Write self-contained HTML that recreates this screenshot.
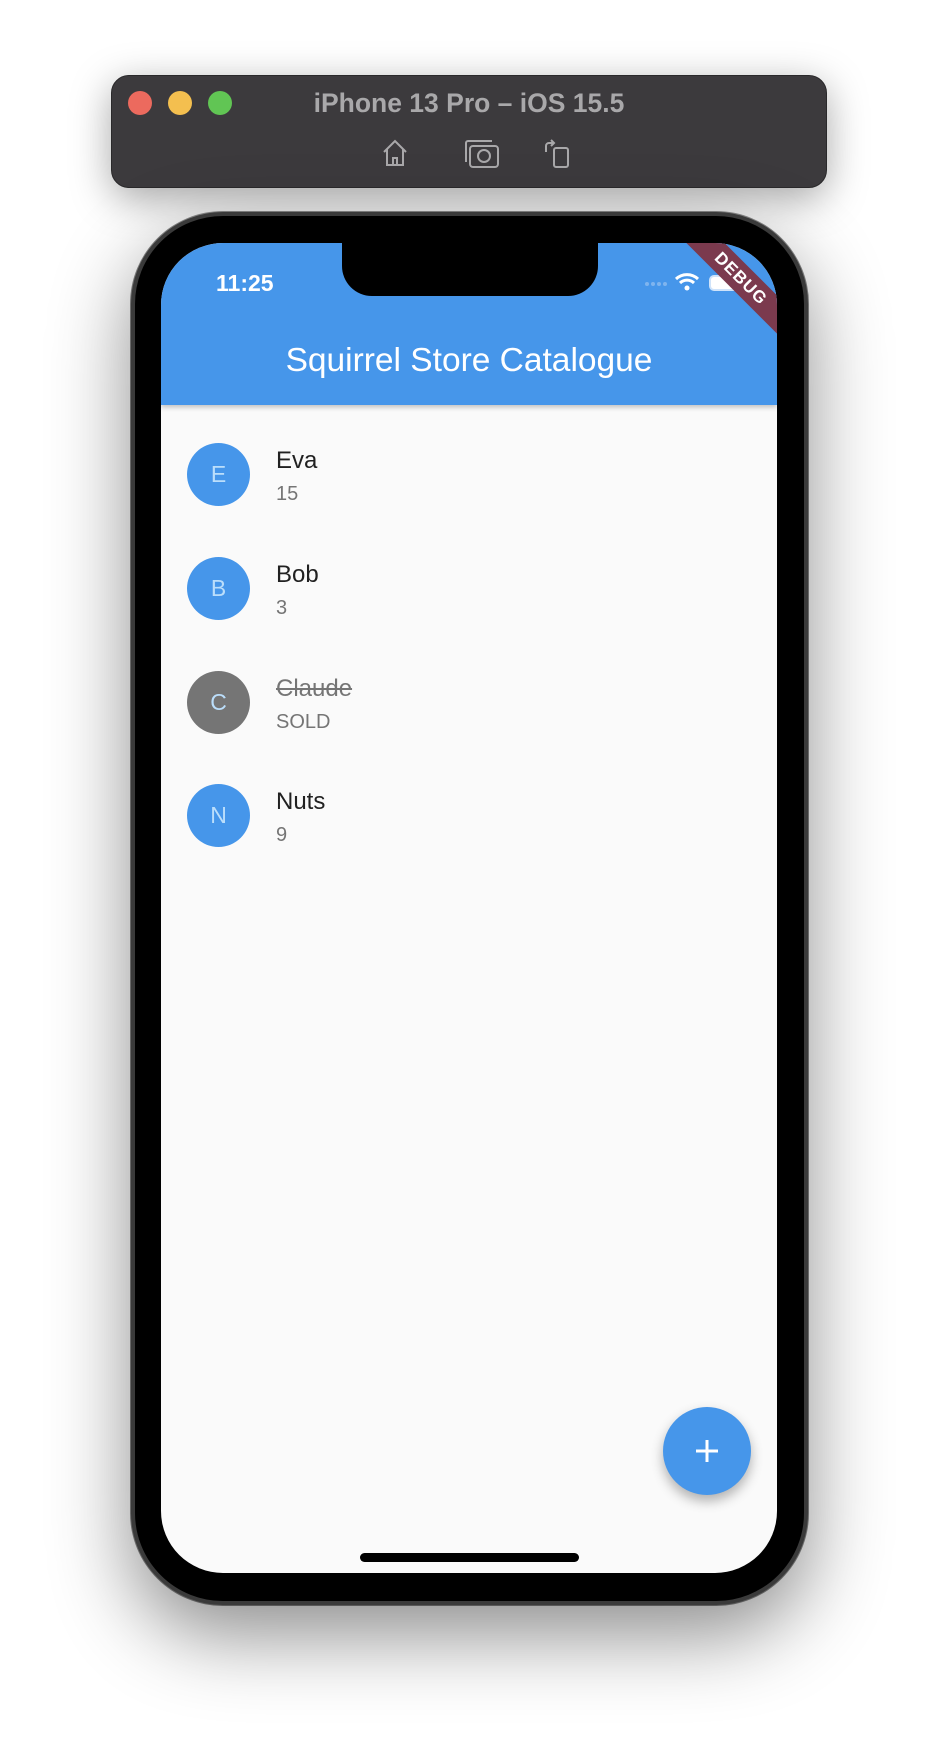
<!DOCTYPE html>
<html><head><meta charset="utf-8"><style>
*{margin:0;padding:0;box-sizing:border-box}
body{width:938px;height:1758px;background:#fff;position:relative;overflow:hidden;font-family:"Liberation Sans",sans-serif}
.bar{position:absolute;left:111px;top:75px;width:716px;height:113px;background:#3c3a3d;border-radius:18px;border:1px solid #2a292b;box-shadow:0 10px 40px rgba(0,0,0,.35)}
.dot{position:absolute;top:91px;width:24px;height:24px;border-radius:50%}
.ttl{position:absolute;left:0;width:938px;top:88px;text-align:center;color:#a9a8aa;font-weight:bold;font-size:26.5px}
.phone{position:absolute;left:131px;top:212px;width:677px;height:1393px;border-radius:92px;background:#000;border:4px solid #3a3a3a;box-shadow:0 30px 80px rgba(0,0,0,.45),0 0 0 1px #888}
.screen{position:absolute;left:161px;top:243px;width:616px;height:1330px;border-radius:62px;background:#fafafa;overflow:hidden}
.app{position:absolute;left:0;top:0;width:616px;height:162px;background:#4696ea;box-shadow:0 2px 5px rgba(0,0,0,.25);overflow:hidden}
.notch{position:absolute;left:181px;top:-5px;width:256px;height:58px;background:#000;border-radius:0 0 30px 30px}
.time{position:absolute;left:55px;top:27px;color:#fff;font-size:23px;font-weight:bold}
.h{position:absolute;left:0;width:616px;top:99px;text-align:center;color:#fff;font-size:33.5px}
.av{position:absolute;left:26px;width:63px;height:63px;border-radius:50%;background:#4696ea;color:#bbdefb;font-size:23px;text-align:center;line-height:63px}
.nm{position:absolute;left:115px;font-size:24px;color:#212121}
.sb{position:absolute;left:115px;font-size:20px;color:#757575}
.fab{position:absolute;left:502px;top:1164px;width:88px;height:88px;border-radius:50%;background:#4696ea;box-shadow:0 6px 12px rgba(0,0,0,.3)}
.home{position:absolute;left:199px;top:1310px;width:219px;height:9px;border-radius:5px;background:#000}
.ribbon{position:absolute;left:470px;top:22px;width:220px;height:27px;background:#7b3a4e;transform:rotate(45deg);color:#fff;font-weight:bold;font-size:17px;text-align:center;line-height:27px;letter-spacing:1px}
</style></head><body>
<div class="bar"></div>
<div class="dot" style="left:128px;background:#ec6a5e"></div>
<div class="dot" style="left:168px;background:#f4bf4f"></div>
<div class="dot" style="left:208px;background:#61c554"></div>
<div class="ttl">iPhone 13 Pro – iOS 15.5</div>
<svg style="position:absolute;left:380px;top:138px" width="200" height="32" fill="none" stroke="#a9a8aa" stroke-width="2">
<path d="M4 14 L15 3 L26 14 M7 11 V27 H23 V11 M13 27 V20 H17 V27"/>
<rect x="90" y="8" width="28" height="21" rx="3"/><path d="M86 24 V5 a2 2 0 0 1 2-2 H112"/><circle cx="104" cy="18" r="6"/>
<rect x="174" y="10" width="14" height="19" rx="2"/><path d="M166 14 V8 a3 3 0 0 1 3-3 H174 M171 2 L174 5 L171 8"/>
</svg>
<div class="phone"></div>
<div class="screen">
<div class="app">
<div class="time">11:25</div>
<svg style="position:absolute;left:483px;top:27px" width="110" height="26">
<g fill="#7fb4ee"><circle cx="3" cy="14" r="2"/><circle cx="9" cy="14" r="2"/><circle cx="15" cy="14" r="2"/><circle cx="21" cy="14" r="2"/></g>
<path d="M32 9 a16 16 0 0 1 22 0 M36 13 a10 10 0 0 1 14 0" stroke="#fff" stroke-width="3" fill="none"/><circle cx="43" cy="18" r="2.5" fill="#fff"/>
<rect x="66" y="6" width="28" height="14" rx="4" fill="#fff" stroke="#cfe3fa" stroke-width="2"/>
</svg>
<div class="h">Squirrel Store Catalogue</div>
<div class="ribbon">DEBUG</div>
</div>
<div class="notch"></div>
<div class="av" style="top:200px">E</div><div class="nm" style="top:204px">Eva</div><div class="sb" style="top:240px">15</div>
<div class="av" style="top:314px">B</div><div class="nm" style="top:318px">Bob</div><div class="sb" style="top:354px">3</div>
<div class="av" style="top:428px;background:#757575">C</div><div class="nm" style="top:432px;color:#757575;text-decoration:line-through">Claude</div><div class="sb" style="top:468px">SOLD</div>
<div class="av" style="top:541px">N</div><div class="nm" style="top:545px">Nuts</div><div class="sb" style="top:581px">9</div>
<div class="fab"><svg width="88" height="88"><path d="M44 33 V55 M33 44 H55" stroke="#fff" stroke-width="3"/></svg></div>
<div class="home"></div>
</div>
</body></html>
